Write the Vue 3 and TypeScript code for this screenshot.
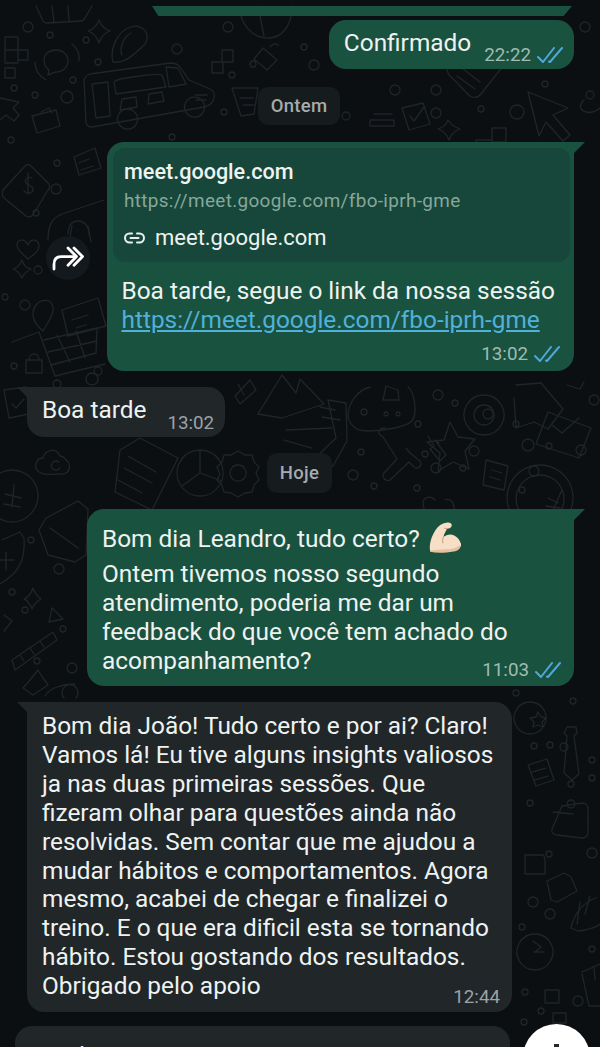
<template>
  <div class="chat">
    <svg class="doodles" width="600" height="1047" viewBox="0 0 600 1047" fill="none">
      <circle v-for="(d, i) in dots" :key="i" :cx="d[0]" :cy="d[1]" :r="d[2]" />
      <path v-for="(p, i) in doodles" :key="'p' + i" :d="p" />
    </svg>

    <div class="strip-row">
      <div class="strip"></div>
    </div>

    <div class="row out first">
      <div class="bubble out-bubble short">
        <span class="text">Confirmado</span>
        <span class="meta">22:22 <DoubleCheck /></span>
      </div>
    </div>

    <div class="row center ontem"><span class="day">Ontem</span></div>

    <div class="row out link-row">
      <div class="forward">
        <svg width="34" height="26" viewBox="0 0 34 26" fill="none" stroke="#fff" stroke-width="2.8" stroke-linecap="round" stroke-linejoin="round">
          <path d="M3 24v-4.500C3 14 6 11.600 10 11.600h14" />
          <path d="M17 3l8.500 8.600-8.500 8.600" />
          <path d="M23 3l8.500 8.600-8.500 8.600" />
        </svg>
      </div>
      <div class="bubble out-bubble tail-right link-bubble">
        <div class="preview">
          <div class="preview-title">meet.google.com</div>
          <div class="preview-url">https://meet.google.com/fbo-iprh-gme</div>
          <div class="preview-host">
            <svg width="21" height="12" viewBox="0 0 21 12" fill="none" stroke="#e9f1ee" stroke-width="2" stroke-linecap="round">
              <path d="M8 1.5H5.5a4.5 4.5 0 0 0 0 9H8" />
              <path d="M13 1.5h2.5a4.5 4.5 0 0 1 0 9H13" />
              <path d="M6.5 6h8" />
            </svg>
            meet.google.com
          </div>
        </div>
        <div class="link-body">
          <div class="text">Boa tarde, segue o link da nossa sessão</div>
          <a class="text link">https://meet.google.com/fbo-iprh-gme</a>
          <div class="meta end">13:02 <DoubleCheck /></div>
        </div>
      </div>
    </div>

    <div class="row in boa-row">
      <div class="bubble in-bubble tail-left short">
        <span class="text">Boa tarde</span>
        <span class="meta">13:02</span>
      </div>
    </div>

    <div class="row center hoje"><span class="day">Hoje</span></div>

    <div class="row out bom-row">
      <div class="bubble out-bubble tail-right block bom">
        <div class="text emoji-line">
          Bom dia Leandro, tudo certo?
          <svg class="emoji" width="33" height="34" viewBox="0 0 32 32">
            <path fill="#f6dfc6" d="M1 28c-1-6 1.500-14 5.500-20C9 4 13 1.500 18 1c2-.2 3.500 .5 4 2 .3 1.500-.5 3-2 3.500l-2.500 .6c-1.500 3-3 5.500-3.500 8 3-2.500 7-3.300 10.500-1.500 3 1.500 5.500 4.500 6.500 8 .5 3.500-2 6-6 6.500-8 1.500-16 2-24 .4z" />
            <path fill="#e6c19d" d="M1 28c6 0 10-1 15-1 5 0 10-1 14-4 .5 3.500-2 5.500-6 6-8 1.500-16 2-23 .4z" />
            <path fill="none" stroke="#c99f78" stroke-width="1" d="M14 15c-1 2-1 4-.5 6M17.500 7l-2.500-.5" />
          </svg>
        </div>
        <div class="text">Ontem tivemos nosso segundo<br />atendimento, poderia me dar um<br />feedback do que você tem achado do<br />acompanhamento?</div>
        <div class="meta end overlap">11:03 <DoubleCheck /></div>
      </div>
    </div>

    <div class="row in long-row">
      <div class="bubble in-bubble tail-left block long">
        <div class="text">Bom dia João! Tudo certo e por ai? Claro!<br />Vamos lá! Eu tive alguns insights valiosos<br />ja nas duas primeiras sessões. Que<br />fizeram olhar para questões ainda não<br />resolvidas. Sem contar que me ajudou a<br />mudar hábitos e comportamentos. Agora<br />mesmo, acabei de chegar e finalizei o<br />treino. E o que era dificil esta se tornando<br />hábito. Estou gostando dos resultados.<br />Obrigado pelo apoio</div>
        <div class="meta end overlap">12:44</div>
      </div>
    </div>

    <div class="row in last-row">
      <div class="bubble in-bubble last">
        <span class="text">Que bom, nos vemos na proxima semana</span>
      </div>
      <div class="fab"><span class="fab-tip"></span></div>
    </div>
  </div>
</template>

<script setup lang="ts">
import { h } from 'vue'

const DoubleCheck = () =>
  h('svg', { class: 'ticks', width: 26, height: 16, viewBox: '0 0 26 16', fill: 'none', stroke: '#4fa8d8', 'stroke-width': 2, 'stroke-linecap': 'round', 'stroke-linejoin': 'round' }, [
    h('path', { d: 'M1 10l5 5L17 1' }),
    h('path', { d: 'M12 14.500l1 .5L25 1' }),
  ])

// small rings scattered on the wallpaper
const dots: number[][] = [
  [28, 27, 5], [50, 35, 3], [86, 40, 3], [177, 49, 5], [228, 27, 5], [304, 47, 3], [314, 65, 5], [253, 64, 3], [232, 75, 3], [98, 62, 3],
  [73, 80, 3], [14, 88, 3], [35, 95, 3], [67, 97, 6], [224, 112, 3], [266, 112, 3], [172, 137, 3], [11, 140, 3],
  [395, 90, 5], [436, 90, 5], [436, 113, 5], [346, 116, 4], [481, 109, 3], [517, 112, 7], [590, 95, 4], [545, 84, 3], [585, 27, 5],
  [57, 163, 3], [56, 189, 5], [36, 213, 3], [38, 270, 4], [25, 305, 5], [5, 297, 3], [14, 366, 3], [98, 371, 4],
  [31, 540, 3], [59, 569, 5], [12, 592, 3], [25, 610, 3], [63, 629, 3], [37, 661, 3], [72, 668, 5],
  [438, 395, 5], [455, 403, 3], [364, 412, 3], [418, 424, 3], [488, 414, 5], [516, 424, 3], [528, 445, 6], [549, 446, 3], [581, 450, 5], [361, 452, 3],
  [425, 454, 3], [474, 451, 5], [436, 468, 5], [463, 468, 3], [353, 475, 5], [374, 486, 3], [417, 488, 3], [522, 490, 3], [534, 471, 5], [594, 400, 5],
  [516, 693, 3], [573, 701, 3], [564, 747, 4], [534, 746, 3], [550, 745, 3], [592, 760, 3], [571, 784, 3], [592, 778, 3], [530, 803, 3],
  [549, 854, 3], [592, 853, 5], [533, 902, 5], [550, 914, 5], [522, 927, 3], [592, 949, 3], [525, 992, 3], [578, 1001, 5], [541, 1011, 3], [524, 1022, 3],
]

const doodles: string[] = [
  // basket, top left
  'M36 6l7 15c1 2 3 2 5 2l33-2c2 0 3-1 4-3l7-12M52 6l2 16M68 6l1 15',
  // diamond star
  'M99 20c2 6 5 9 11 11-6 2-9 6-11 12-2-6-5-10-11-12 6-2 9-5 11-11z',
  // cross blocks
  'M5 37h13v13h-13zM18 50h10v10h-10zM5 50h13v13h-13zM5 68h10v10h-10z',
  // speaker circles
  'M44 60c0-6 5-10 12-10s12 5 12 11-5 11-12 11c-3 0-5 2-8 3l1-5c-3-2-5-6-5-10zM35 62c0 8 4 14 11 18M72 44c5 4 8 10 7 17',
  // taco
  'M113 62c-3-10 2-30 18-35 6-2 12 0 15 5 3 6 0 12-5 16-7 6-16 16-28 14zM122 55c-3-6 1-18 9-22',
  // pie
  'M240 6c-1 17 12 32 28 32 14 0 24-12 24-32M258 6l6 30',
  // infinity blocks
  'M222 50h11v12h-11zM212 62h11v11h-11z',
  // lock
  'M263 48l14 12-10 10-13-11zM270 47c2-3 6-4 8-2',
  // truck
  'M84 80c1-3 3-5 6-6l80-11c4 0 8 1 10 4l9 13 21 9c4 2 5 5 4 9-1 5-5 8-10 9L92 127c-3 0-6-2-6-5zM92 84l16-2 2 34-14 2zM178 68l8 16-17 3-3-20zM114 82c2-4 45-9 48-7l4 12-50 7zM120 110l2-11 14-2 1 10zM148 104l1-10 13-2 2 9zM195 95h12M196 100h10',
  'M129 129a10 10 0 1 0-1 .1zM196 117a10 10 0 1 0-1 .1z',
  // arrow pointer left
  'M0 98l19 4-6 6 6 7-5 6-8-6-6 5',
  // suitcase
  'M32 116l24-6 4 16-23 7zM41 112l8-4 3 5',
  // cart bit behind Ontem
  'M232 88h26l-4 26-13 2zM240 98h13M243 105h11',
  // price tag
  'M3 190l22-24c2-2 4-2 6 0l17 17c2 2 2 5 0 7l-15 25c-2 2-5 2-7 1L4 198c-2-2-2-5-1-8z',
  'M32 178c-5-2-8 2-6 5s8 3 7 7-6 4-9 1M28 173v21',
  // note
  'M74 157l21-9 6 20-22 7zM79 163l10-4M81 170l12-4',
  // headphones + device
  'M48 240c0-15 4-22 14-26l42-14M68 234c0-8 4-13 10-13s11 5 11 13M72 226l-3 16M88 226l3 16',
  // heart
  'M28 245c-4-8-11-5-11 0 0 6 7 10 11 14 5-4 12-8 11-14-1-5-8-8-11 0z',
  // 4 point star
  'M22 260c2 6 4 8 9 9-5 2-7 5-9 9-2-5-4-7-9-9 5-1 7-4 9-9z',
  // cart
  'M12 342l27-10 16 44 50-12M44 340l53-12-1 25-45 12M57 335l13 27M76 331l9 27M48 352l49-11M57 380a4 4 0 1 0 .1 0M92 373a6 6 0 1 0 .1 0',
  // heart + card above cart
  'M36 305c6-7 16-6 17 2 1 5-2 11-10 24-10-8-13-18-7-26zM62 310l36-12 8 28-38 10zM72 320l16-5M76 328l10-3',
  // lock bottom
  'M26 360h16v13h-16zM29 360c0-8 10-8 10 0',
  // top right and near ontem
  'M452 60c-8 8-5 13 0 18 6 5 11 12 18 18 4 2 8 2 11-2l22-28-6-6-3 6-8-8-4 6-8-7z',
  'M462 68l18 14M457 76l18 13',
  'M528 92l40 16-15 7 17 20-7 6-17-19-7 14z',
  'M402 108l21-5 7 21-21 6zM410 116l4 5 10-14',
  'M370 126h24v-6h-24zM374 114h18',
  'M448 120c3 5 6 7 12 9-6 2-9 5-11 11-2-6-5-9-11-11 6-2 8-4 10-9z',
  'M492 128h14v14h-14zM476 140h16v12h-16z',
  'M584 100c-5 5-5 10 2 12 4 1 10 0 14-4',
  // behind Hoje etc
  'M370 387c-12 3-21 15-22 27 0 10 8 17 18 17 18 0 40-4 46-10 6-8 2-30-4-34',
  'M386 386l12 4 1 10h-16zM386 412a2 2 0 1 0 .1 0M398 412a2 2 0 1 0 .1 0',
  'M328 400l18 3 1 38-14 25-21 -5 24-23zM335 410l-15-3M340 420l-18-3',
  'M484 395a20 20 0 1 0 .1 0zM484 405a10 10 0 1 0 .1 0',
  'M516 385l25 -2 22 26-15 20-14-7-18 6-2-30',
  'M548 412l43 16-12 30-43-14zM552 425l10 8 17-15',
  'M567 385l13 4 4-7',
  'M450 422l8 15 17 2-10 12 4 18-16-7-15 9 2-18-13-11 17-2z',
  'M385 428c-4-1-8 3-5 7l3 2 14 22-13 14c-3 4 2 9 6 7l19-18 5 5c2 3 9 0 6-6l-10-8-4-5',
  'M428 436l6 10-4 3 10 12 6-6-11-15 4 3',
  'M486 460l22 6-4 24-21-5zM492 470l10 3M490 477l10 3',
  'M540 465a33 33 0 1 0 .1 0zM540 475a24 24 0 1 0 .1 0zM562 490l-10 22M548 498l10 5M546 506l14 2',
  'M435 500c-4-5-12-3-12 3s5 14 3 20M445 500c5-2 9 2 9 8s-3 15-6 20',
  // left column under Boa tarde
  'M120 450l20-12 38 20-26 52-37-18zM128 456l28 16M124 468l28 15M118 480l24 13',
  'M200 450a23 23 0 1 0 .1 0zM200 473l0-23M200 473l22 8M200 473l-18 13',
  'M238 451l7 4 7 0 2 7 5 5-3 6 3 7-5 5-2 7-7 1-7 4-7-4-7-1-2-7-5-5 3-6-3-7 5-5 2-7 7 0z',
  'M238 465a8 8 0 1 0 .1 0z',
  'M60 456c-4-9-15-6-17 2-7 0-10 10-4 14 8 5 17 1 23 2 8 0 10-10 4-14-2-3-4-4-6-4zM59 462c-5-3-9 2-7 6 2 3 6 3 8 0',
  'M4 390l22-3 3 27-20 4zM12 404l4 4 8-9',
  'M12 470a26 26 0 1 0 .1 0zM14 485l-2 22M5 494l16 4M4 504l16 3',
  // tablet top of left column
  'M250 380l6 10-16 14-5-8zM238 384l6 11',
  'M282 375l14 18 4-14 24 25 -42 14-24-4zM286 430l46-2M284 440l28 8',
  // shield and pencil under Hoje left
  'M2 540l18-8 4 6c1 17-2 31-18 42L0 584M6 552v18M0 560h14',
  'M46 518l32-17 10 8-2 46-11 7-27-7-9-25zM50 528l28 20',
  'M12 660l41-28 4 8-42 30zM20 655l4 6M30 648l4 6M40 641l4 6',
  'M33 588c2 6 5 9 8 11-4 2-7 5-9 10-2-5-4-9-8-10 5-2 7-5 9-11z',
  'M4 615l8 6-8 10',
  'M52 608l11 11-14 3z',
  'M30 680l8-10 5 8 5 7-15 10-10-7z',
  'M45 696c4-8 18-12 30-12M64 698a8 8 0 1 1 12 0',
  // right column
  'M530 702a16 16 0 1 0 .1 0zM538 712l3 5 5 1-4 4 1 5-5-2-5 2 1-5-4-4 6-1z',
  'M567 727h9l1 6-3 3 5 38-7 6-8-7 3-37-3-3z',
  'M528 765l19-6 7 21-18 6zM532 772l14-4M534 780l14-4',
  'M562 806l20-3c4 0 6 3 6 6v24c0 3-3 5-6 5l-25-3c-4 0-6-3-5-6zM553 812l20 2M571 800a4 4 0 1 0 .1 0',
  'M525 855h17c3 0 3 3 3 6v13h-20zM525 855v19',
  'M547 881l17-8 7 4 6 14-20 11-6-2z',
  'M596 898c-12 4-22 15-25 30l7 3c12-1 20-5 22-7M580 902l-3 22M590 896l-5 18',
  'M535 934a18 18 0 1 1 -.1 0zM535 952l6-5 -8-6M534 952h10',
  'M582 972l18-8M582 974l7 32h11M594 968l1 12',
  'M545 990h14v13h-14z',
  'M553 1013h13v10h-13z',
]
</script>

<style scoped>
.chat {
  position: relative;
  width: 600px;
  height: 1047px;
  overflow: hidden;
  background: #0b0f12;
  font-family: Roboto, "Noto Sans", sans-serif;
  color: #eef3f1;
}

.doodles {
  position: absolute;
  inset: 0;
  stroke: #202528;
  stroke-width: 1.3;
  stroke-linecap: round;
  stroke-linejoin: round;
}

.row {
  position: relative;
  display: flex;
  padding: 0 26px 0 27px;
}

.out { justify-content: flex-end; }
.in { justify-content: flex-start; }
.center { justify-content: center; }

.strip-row {
  position: relative;
  display: flex;
  justify-content: flex-end;
  padding: 6px 28px 0 0;
}

.strip {
  width: 420px;
  height: 10px;
  background: #1a5240;
  clip-path: polygon(0 0, 100% 0, 98% 100%, 1.5% 100%);
}

.day {
  display: flex;
  align-items: center;
  justify-content: center;
  height: 38px;
  padding: 0 13px;
  border-radius: 10px;
  background: #161b1e;
  color: #a5abae;
  font-size: 18.5px;
  font-weight: 500;
  letter-spacing: 0.3px;
}

.hoje .day { height: 40px; }

.first { margin-top: 4px; }
.ontem { margin-top: 18px; padding-right: 29px; }
.link-row { margin-top: 17px; align-items: flex-start; }
.boa-row { margin-top: 16px; }
.hoje { margin-top: 16px; padding-right: 28px; }
.bom-row { margin-top: 16px; }
.long-row { margin-top: 16px; }
.last-row { margin-top: 14px; padding-left: 15px; padding-right: 0; }

.bubble {
  position: relative;
  border-radius: 17px;
}

.out-bubble { background: #1a5240; }
.in-bubble { background: #212629; }

.tail-right { border-top-right-radius: 0; }
.tail-left { border-top-left-radius: 0; }

.tail-right::after,
.tail-left::after {
  content: "";
  position: absolute;
  top: 0;
  width: 11px;
  height: 11px;
}

.tail-right::after {
  right: -11px;
  background: #1a5240;
  clip-path: polygon(0 0, 100% 0, 0 100%);
}

.tail-left::after {
  left: -10px;
  background: #212629;
  clip-path: polygon(0 0, 100% 0, 100% 100%);
}

.short {
  display: flex;
  height: 49px;
  padding: 8px 11px 0 15px;
  box-sizing: border-box;
}

.boa-row .short { height: 50px; }

.text {
  font-size: 24.4px;
  line-height: 29px;
  white-space: nowrap;
}

.meta {
  display: flex;
  align-items: center;
  gap: 6px;
  font-size: 18.8px;
  line-height: 22px;
  color: #9fbcb1;
  white-space: nowrap;
}

.short .meta {
  margin: 12px 0 0 13px;
}

.in-bubble .meta { color: #9ca3a6; }

.boa-row .meta {
  margin: 13px 0 0 21px;
}

.end { justify-content: flex-end; }

.forward {
  width: 44px;
  height: 44px;
  margin: 94px 17px 0 0;
  border-radius: 50%;
  background: #14191d;
  display: flex;
  align-items: center;
  justify-content: center;
}

.link-bubble {
  width: 467px;
  height: 229px;
  box-sizing: border-box;
  padding: 6px 4px 0 6px;
}

.preview {
  height: 114px;
  box-sizing: border-box;
  padding: 10px 11px 0;
  background: #16473a;
  border-radius: 12px;
}

.preview-title {
  font-size: 21.6px;
  font-weight: 500;
  line-height: 28px;
}

.preview-url {
  margin-top: 3px;
  font-size: 18.9px;
  line-height: 24px;
  letter-spacing: 0.35px;
  color: #87a89c;
}

.preview-host {
  display: flex;
  align-items: center;
  gap: 10px;
  margin-top: 12px;
  font-size: 22px;
  line-height: 26px;
}

.link-body {
  padding: 13.5px 10px 0 8.5px;
}

.link {
  display: block;
  color: #4fb1dc;
  text-decoration: underline;
}

.link-body .meta {
  margin-top: 9.5px;
}

.block {
  box-sizing: border-box;
  padding: 14.5px 13px 0 15px;
}

.bom {
  width: 487px;
  height: 177px;
}

.emoji-line {
  display: flex;
  align-items: center;
  gap: 9px;
  height: 29px;
  margin-bottom: 6px;
}

.emoji {
  margin: -3px 0;
}

.overlap {
  margin-top: -15.5px;
}

.long {
  width: 485px;
  height: 310px;
  padding: 10px 12px 0 15px;
}

.long .text {
  line-height: 28.9px;
}

.long .overlap {
  margin-top: -15px;
}

.last {
  width: 495px;
  height: 60px;
  padding: 15px 15px;
  box-sizing: border-box;
}

.fab {
  position: absolute;
  left: 523px;
  top: -2px;
  width: 67px;
  height: 67px;
  border-radius: 50%;
  background: #fff;
}

.fab-tip {
  position: absolute;
  left: 31px;
  top: 20px;
  width: 5px;
  height: 8px;
  background: #25292c;
}
</style>
